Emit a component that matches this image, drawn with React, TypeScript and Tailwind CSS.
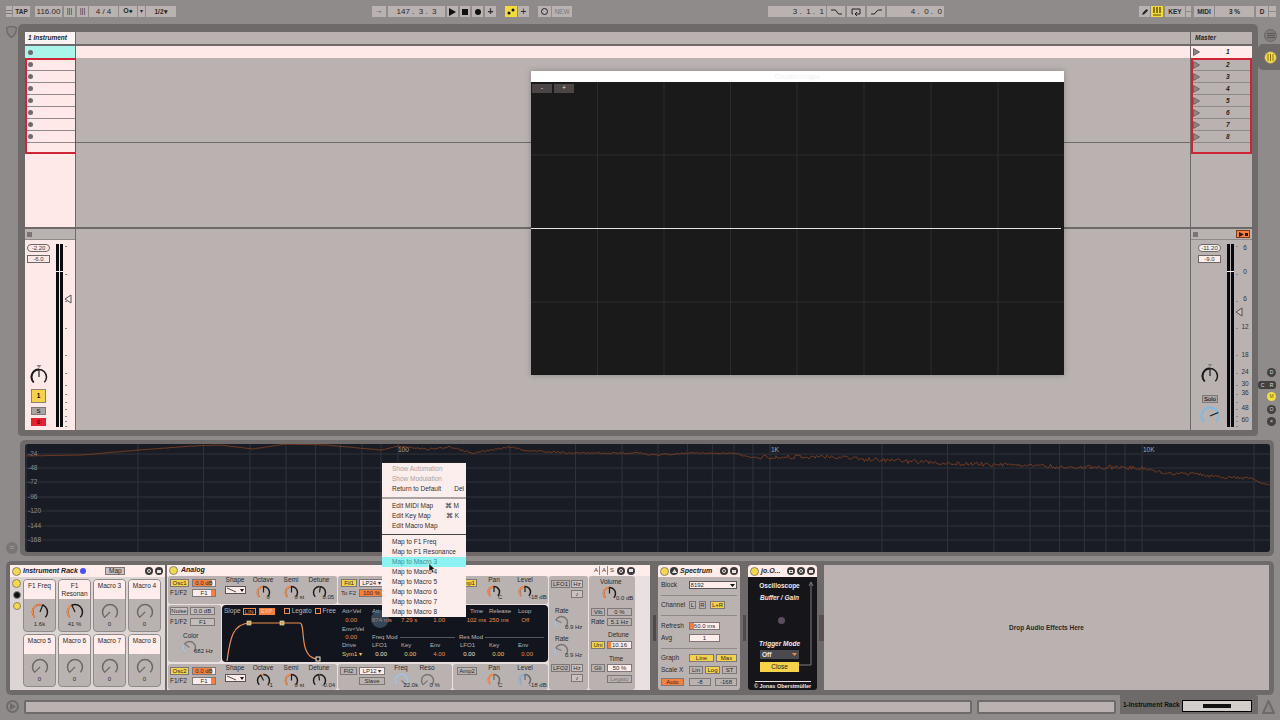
import type { ReactNode } from "react";

const box = "flex items-center justify-center bg-[#b9b2b1] text-[#2a2a2a]";
const chip = "flex items-center justify-center border border-[#7d7877] text-[6px] leading-none text-[#2a2a2a]";

function Box({ className = "", children }: { className?: string; children?: ReactNode }) {
  return <div className={`${box} h-[11px] text-[8px] ${className}`}>{children}</div>;
}

function Chip({ className = "", children }: { className?: string; children?: ReactNode }) {
  return <div className={`${chip} ${className}`}>{children}</div>;
}

type KnobProps = {
  size?: number;
  v?: number;
  from?: number;
  color?: string;
  track?: string;
  needle?: string;
  width?: number;
};

function Knob({ size = 16, v = 0.5, from = 0, color = "#f08a4b", track = "#1c1c1c", needle = "#1c1c1c", width = 1.5 }: KnobProps) {
  const r = size / 2 - width;
  const c = size / 2;
  const pt = (t: number, rad = r) => {
    const a = ((-135 + 270 * t - 90) * Math.PI) / 180;
    return `${(c + rad * Math.cos(a)).toFixed(2)} ${(c + rad * Math.sin(a)).toFixed(2)}`;
  };
  const arc = (a: number, b: number) =>
    `M${pt(a)} A${r} ${r} 0 ${(b - a) * 270 > 180 ? 1 : 0} 1 ${pt(b)}`;
  const lo = Math.min(from, v);
  const hi = Math.max(from, v);
  return (
    <svg width={size} height={size} className="block shrink-0">
      <path d={arc(0, 1)} fill="none" stroke={track} strokeWidth={width} />
      {hi > lo && <path d={arc(lo, hi)} fill="none" stroke={color} strokeWidth={width + 0.3} />}
      <path d={`M${c} ${c} L${pt(v, r + 0.5)}`} stroke={needle} strokeWidth={1.2} />
    </svg>
  );
}

function PanKnob() {
  return (
    <div className="flex flex-col items-center">
      <svg width="6" height="3" className="block"><path d="M0.5 0 H5.5 L3 3 Z" fill="#8a8584" /></svg>
      <Knob size={18} v={0.5} color="#1c1c1c" />
    </div>
  );
}

function Param({ label, value, w = "w-[28px]", knob, valueClass = "left-[14px]" }: { label: string; value: string; w?: string; knob: ReactNode; valueClass?: string }) {
  return (
    <div className={`${w} flex flex-col items-center`}>
      <span className="text-[6.5px] leading-[8px] text-[#2a2a2a] whitespace-nowrap">{label}</span>
      <div className="relative mt-[1px]">
        {knob}
        <span className={`absolute top-[8px] ${valueClass} text-[6px] leading-[8px] text-[#2a2a2a] whitespace-nowrap`}>{value}</span>
      </div>
    </div>
  );
}

function Dot({ className = "bg-[#3a3a3a]", children }: { className?: string; children?: ReactNode }) {
  return (
    <div className={`w-[8px] h-[8px] rounded-full shrink-0 flex items-center justify-center text-[5px] leading-none text-[#e8e0df] ${className}`}>
      {children}
    </div>
  );
}

function Led() {
  return <div className="w-[9px] h-[9px] rounded-full bg-[#f5d94c] border border-[#8a8272] shrink-0" />;
}

function TitleIcons({ n = 2 }: { n?: number }) {
  return (
    <div className="flex gap-[2px] ml-auto">
      {n > 2 && <Dot><span className="w-[4px] h-[3px] border border-[#e8e0df]" /></Dot>}
      <Dot><span className="w-[4px] h-[4px] rounded-full border border-[#e8e0df]" /></Dot>
      <Dot><span className="w-[4px] h-[3px] bg-[#e8e0df]" /></Dot>
    </div>
  );
}

function Slot() {
  return (
    <div className="h-[12px] shrink-0 flex items-center pl-[1px] border-b border-[#8f8a89]">
      <div className="w-[5px] h-[5px] rounded-full bg-[#6f6a6a]" />
    </div>
  );
}

function MasterSlot({ n, pale = false }: { n: number; pale?: boolean }) {
  return (
    <div className={`h-[12px] shrink-0 flex items-center ${pale ? "bg-[#ffeceb] pl-[2px]" : "border-b border-[#8f8a89]"}`}>
      <svg width="7" height="8"><path d="M0.5 0.5 L6.5 4 L0.5 7.5 Z" fill="#8a8584" stroke="#6c6766" /></svg>
      <span className="ml-[26px] text-[6.5px] font-bold italic text-[#222]">{n}</span>
    </div>
  );
}

function Meter({ master = false }: { master?: boolean }) {
  const ticks = [0, 28, 55, 82, 109, 127, 139, 148, 156, 163, 170, 175, 180];
  const marks = [[6, 3], [0, 27], [6, 54], [12, 82], [18, 110], [24, 127], [30, 139], [36, 148], [48, 163], [60, 175]];
  const bar = master ? "#050914" : "#0b0b0d";
  return (
    <svg width={master ? 25 : 18} height="184" className="block shrink-0">
      <rect x="0" y="0" width="3" height="183" fill={bar} />
      <rect x="4" y="0" width="3" height="183" fill={bar} />
      <rect x="0" y="27" width="7" height="1" fill="#f4f0ef" />
      {ticks.map((t) => (
        <rect key={t} x="9" y={t + 2} width="2" height="1" fill="#8c8786" />
      ))}
      <path
        d={master ? "M9 68 L15 64 L15 72 Z" : "M9 55 L15 51 L15 59 Z"}
        fill={master ? "#c9c2c1" : "#ffe9e8"}
        stroke="#55504f"
      />
      {master &&
        marks.map(([m, y], i) => (
          <text key={i} x="18" y={y + 2.5} textAnchor="middle" fontSize="6.5" fill="#333">{m}</text>
        ))}
    </svg>
  );
}

const anchors: [number, number][] = [
  [26, 456], [82, 455], [139, 450], [192, 446], [220, 445], [253, 449], [286, 444], [327, 445], [359, 448],
  [382, 450], [398, 446], [428, 449], [449, 447], [473, 453], [510, 447], [531, 451], [571, 453], [640, 453],
  [652, 455], [687, 453], [734, 453], [754, 458], [770, 457], [836, 457], [873, 460], [926, 462], [966, 464],
  [1028, 465], [1060, 467], [1105, 467], [1146, 468], [1162, 473], [1199, 474], [1220, 478], [1252, 478],
  [1260, 483], [1270, 485],
];

function curvePoints() {
  const pts: string[] = [];
  let seg = 0;
  for (let x = 26; x <= 1270; x += 1.5) {
    while (seg < anchors.length - 2 && x > anchors[seg + 1][0]) seg++;
    const [x0, y0] = anchors[seg];
    const [x1, y1] = anchors[seg + 1];
    const y = y0 + ((y1 - y0) * (x - x0)) / (x1 - x0);
    const n = Math.sin(x * 12.9898) * 43758.5453;
    const amp = x < 400 ? 0.2 : x < 760 ? 1 : x < 1150 ? 2.2 : x < 1250 ? 1.6 : 0.2;
    pts.push(`${(x - 25).toFixed(1)},${(y - 444 + (n - Math.floor(n) - 0.5) * 2 * amp).toFixed(1)}`);
  }
  return pts.join(" ");
}

function Spectrum() {
  const lines: number[] = [];
  [26, 398, 770, 1142].forEach((d) => {
    for (let k = 1; k < 10; k++) lines.push(d + 372 * Math.log10(k) - 25);
  });
  const h = [10, 24, 38, 53, 67, 82, 96];
  const labels = ["-24", "-48", "-72", "-96", "-120", "-144", "-168"];
  return (
    <svg width="1245" height="108" className="block">
      {h.map((y) => (
        <line key={y} x1="0" x2="1245" y1={y} y2={y} stroke="#30333b" />
      ))}
      {lines.filter((x) => x < 1245).map((x) => (
        <line key={x} x1={x} x2={x} y1="0" y2="108" stroke="#30333b" />
      ))}
      {labels.map((l, i) => (
        <text key={l} x="3" y={h[i] + 2} fontSize="6.5" fill="#8d8f95" stroke="#191c24" strokeWidth="0" >{l}</text>
      ))}
      <text x="373" y="8" fontSize="6.5" fill="#a5a7ad">100</text>
      <text x="746" y="8" fontSize="6.5" fill="#a5a7ad">1K</text>
      <text x="1118" y="8" fontSize="6.5" fill="#a5a7ad">10K</text>
      <polyline points={curvePoints()} fill="none" stroke="#7f3e20" strokeWidth="0.9" />
    </svg>
  );
}

function MacroCard({ label, value = "0", knob }: { label: string; value?: string; knob?: ReactNode }) {
  return (
    <div className="h-[53px] rounded-[4px] overflow-hidden border border-[#8f8a89] bg-[#b9b2b1] flex flex-col">
      <div className="h-[19px] bg-[#ffeceb] text-center text-[6.5px] leading-[8px] pt-[2px] text-[#2a2a2a]">{label}</div>
      <div className="flex flex-col items-center pt-[4px]">
        {knob ?? <Knob size={18} v={0} track="#6c6867" needle="#6c6867" />}
        <span className="text-[6px] leading-[7px] text-[#2a2a2a]">{value}</span>
      </div>
    </div>
  );
}

function Osc({ name, knobs }: { name: string; knobs: ReactNode }) {
  return (
    <div className="h-full w-[169px] rounded-[3px] bg-[#b9b2b1] flex pt-[3px] pl-[2px]">
      <div className="w-[46px] flex flex-col gap-[2px]">
        <div className="flex gap-[3px]">
          <Chip className="w-[19px] h-[8px] bg-[#f6d24a]">{name}</Chip>
          <Chip className="w-[24px] h-[8px] bg-[linear-gradient(90deg,#f4813f_85%,#ffeceb_85%)]">0.0 dB</Chip>
        </div>
        <div className="flex gap-[3px] items-center">
          <span className="w-[19px] text-[6.5px] leading-[8px] text-[#2a2a2a]">F1/F2</span>
          <Chip className="w-[24px] h-[8px] bg-[linear-gradient(90deg,#ffeceb_80%,#f4813f_80%)]">F1</Chip>
        </div>
      </div>
      <div className="w-[24px] ml-[7px] -mt-[3px] flex flex-col items-center">
        <span className="text-[6.5px] leading-[8px] text-[#2a2a2a]">Shape</span>
        <div className="w-[21px] h-[8px] mt-[2px] bg-[#ffeceb] border border-[#555] flex items-center justify-between pr-[1px]">
          <svg width="12" height="6"><path d="M1 1 L10 5" stroke="#222" strokeWidth="0.8" /></svg>
          <svg width="4" height="3"><path d="M0 0 H4 L2 3 Z" fill="#111" /></svg>
        </div>
      </div>
      <div className="-mt-[3px]">{knobs}</div>
    </div>
  );
}

function Amp({ name, on }: { name: string; on: boolean }) {
  return (
    <div className="h-full w-[95px] rounded-[3px] bg-[#b9b2b1] flex pt-[3px] pl-[4px]">
      <Chip className={`w-[20px] h-[8px] ${on ? "bg-[#f6d24a]" : ""}`}>{name}</Chip>
      <div className="ml-[4px] -mt-[3px]">
        <Param
          label="Pan"
          value="C"
          w="w-[26px]"
          valueClass="left-[11px]"
          knob={<Knob size={14} v={0.5} track={on ? "#1c1c1c" : "#6c6867"} needle={on ? "#1c1c1c" : "#6c6867"} />}
        />
      </div>
      <div className="ml-[4px] -mt-[3px]">
        <Param
          label="Level"
          value="-18 dB"
          w="w-[28px]"
          valueClass="left-[11px]"
          knob={on ? <Knob size={14} v={0.5} /> : <Knob size={14} v={0.5} color="#8cb4dc" track="#6c6867" needle="#6c6867" />}
        />
      </div>
    </div>
  );
}

function EnvGrid() {
  const lbl = "text-[#bdb6b5]";
  const org = "text-[#f08a4b]";
  const ylw = "text-[#f0d060]";
  const wht = "text-[#e8e0df]";
  const cells: [string, string][] = [
    ["Att<Vel", lbl], ["Att", lbl], ["", lbl], ["", lbl], ["      Time", lbl], ["Release", lbl], ["Loop", lbl],
    ["  0.00", org], ["874 ms", org], ["7.29 s", org], ["  1.00", org], ["    102 ms", org], ["250 ms", org], ["  Off", org],
  ];
  const row3: [string, string][] = [
    ["Drive", lbl], ["LFO1", lbl], ["Key", lbl], ["Env", lbl], ["LFO1", lbl], ["Key", lbl], ["Env", lbl],
    ["Sym1 ▾", ylw], ["  0.00", wht], ["  0.00", ylw], ["  4.00", org], ["  0.00", wht], ["  0.00", ylw], ["  0.00", org],
  ];
  return (
    <div className="relative w-[206px] ml-[4px] pt-[2px] text-[6px] leading-[9px] whitespace-pre">
      <div className="grid grid-cols-[30px_29px_29px_30px_29px_29px_30px]">
        {cells.map(([t, c], i) => (
          <span key={i} className={c}>{t}</span>
        ))}
      </div>
      <div className="absolute left-[29px] top-[5px] w-[18px] h-[18px] rounded-full bg-[#5a7896]/50" />
      <div className="flex h-[8px] leading-[8px] text-[#bdb6b5]">
        <span className="w-[30px]">Env&lt;Vel</span>
      </div>
      <div className="flex h-[8px] leading-[8px] text-[#bdb6b5]">
        <span className="w-[30px] text-[#f08a4b]">  0.00</span>
        <span className="w-[87px] flex items-center">
          Freq Mod<span className="ml-[2px] flex-1 h-px bg-[#55585f] mr-[4px]" />
        </span>
        <span className="flex-1 flex items-center">
          Res Mod<span className="ml-[2px] flex-1 h-px bg-[#55585f] mr-[4px]" />
        </span>
      </div>
      <div className="grid grid-cols-[30px_29px_29px_30px_29px_29px_30px]">
        {row3.map(([t, c], i) => (
          <span key={i} className={c}>{t}</span>
        ))}
      </div>
    </div>
  );
}

function Analog() {
  return (
    <div className="w-[483px] h-full bg-[#e9e0df] flex flex-col shrink-0">
      <div className="h-[12px] bg-[#ffeceb] flex items-center pl-[2px] pr-[15px] gap-[3px]">
        <Led />
        <span className="text-[7px] font-bold italic text-[#222]">Analog</span>
        <div className="ml-auto flex items-center gap-[2px]">
          <span className="text-[6px] text-[#333] border-r border-[#888] pr-[1px]">A</span>
          <span className="text-[6px] text-[#333] border-r border-[#888] pr-[1px]">A</span>
          <span className="text-[6px] text-[#333] pr-[1px]">S</span>
          <TitleIcons />
        </div>
      </div>
      <div className="flex flex-1 pl-[1px]">
        <div className="w-[380px] flex flex-col">
          <div className="h-[28px] flex gap-px">
            <Osc
              name="Osc1"
              knobs={
                <div className="flex ml-[2px]">
                  <Param label="Octave" value="0" knob={<Knob size={15} v={0.5} />} valueClass="left-[11px]" />
                  <Param label="Semi" value="0 st" knob={<Knob size={15} v={0.5} />} valueClass="left-[11px]" />
                  <Param label="Detune" value="0.05" knob={<Knob size={15} v={0.53} from={0.5} />} valueClass="left-[11px]" />
                </div>
              }
            />
            <div className="w-[114px] h-full rounded-[3px] bg-[#b9b2b1] flex flex-col gap-[2px] pt-[3px] pl-[3px]">
              <div className="flex gap-[2px]">
                <Chip className="w-[16px] h-[8px] bg-[#f6d24a]">Fil1</Chip>
                <Chip className="w-[25px] h-[8px] bg-[#ffeceb]">LP24 ▾</Chip>
              </div>
              <div className="flex gap-[2px] items-center">
                <span className="w-[16px] text-[6px] leading-[8px] text-[#2a2a2a] whitespace-nowrap">To F2</span>
                <Chip className="w-[25px] h-[8px] bg-[#f4813f]">100 %</Chip>
              </div>
            </div>
            <Amp name="Amp1" on />
          </div>
          <div className="h-[57px] mt-px flex">
            <div className="w-[53px] rounded-[3px] bg-[#b9b2b1] pt-[2px] pl-[2px] flex flex-col">
              <div className="flex gap-[2px]">
                <Chip className="w-[18px] h-[8px] bg-[#c9c2c1]">Noise</Chip>
                <Chip className="w-[25px] h-[8px] bg-[#c4bdbc]">0.0 dB</Chip>
              </div>
              <div className="flex gap-[2px] items-center mt-[3px]">
                <span className="w-[18px] text-[6.5px] leading-[8px] text-[#2a2a2a]">F1/F2</span>
                <Chip className="w-[25px] h-[8px] bg-[#c4bdbc]">F1</Chip>
              </div>
              <span className="mt-[6px] ml-[13px] text-[6.5px] leading-[8px] text-[#2a2a2a]">Color</span>
              <div className="relative ml-[12px]">
                <Knob size={15} v={0.3} color="#a7c5e4" track="#7b7675" needle="#7b7675" />
                <span className="absolute left-[12px] top-[7px] text-[6px] leading-[8px] text-[#2a2a2a]">682 Hz</span>
              </div>
            </div>
            <div className="flex-1 ml-[1px] rounded-[4px] bg-[#12151d] flex">
              <div className="w-[116px] pt-[2px] pl-[2px]">
                <div className="flex items-center text-[6.5px] leading-[8px] text-[#bdb6b5]">
                  <span>Slope</span>
                  <span className="ml-[2px] w-[13px] h-[7px] border border-[#f08a4b] text-center text-[#f08a4b] text-[5.5px] leading-[6px]">LIN</span>
                  <span className="ml-[3px] w-[16px] h-[7px] bg-[#f4813f] text-center text-[#f6ccb0] text-[5.5px] leading-[7px]">EXP</span>
                  <span className="ml-[9px] w-[6px] h-[6px] border border-[#f08a4b]" />
                  <span className="ml-[2px]">Legato</span>
                  <span className="ml-[3px] w-[6px] h-[6px] border border-[#f08a4b]" />
                  <span className="ml-[2px]">Free</span>
                </div>
                <svg width="112" height="46" className="block mt-[1px]">
                  <path d="M3 45 C6 22 9 8 25 7 L76 7 C80 7 78 26 82 34 C85 42 90 43 94 43" fill="none" stroke="#ef8d4f" strokeWidth="1.2" />
                  <rect x="23" y="5" width="4" height="4" fill="#c9a45a" stroke="#f4e9c9" strokeWidth="0.6" />
                  <rect x="56" y="5" width="4" height="4" fill="#c9a45a" stroke="#f4e9c9" strokeWidth="0.6" />
                  <rect x="92" y="41" width="4" height="4" fill="#12151d" stroke="#f4e9c9" strokeWidth="1" />
                </svg>
              </div>
              <EnvGrid />
            </div>
          </div>
          <div className="h-[26px] mt-[2px] flex gap-px">
            <Osc
              name="Osc2"
              knobs={
                <div className="flex ml-[2px]">
                  <Param label="Octave" value="-1" knob={<Knob size={15} v={0.4} from={0.5} />} valueClass="left-[12px]" />
                  <Param label="Semi" value="0 st" knob={<Knob size={15} v={0.5} />} valueClass="left-[11px]" />
                  <Param label="Detune" value="-0.04" knob={<Knob size={15} v={0.47} from={0.5} />} valueClass="left-[10px]" />
                </div>
              }
            />
            <div className="w-[114px] h-full rounded-[3px] bg-[#b9b2b1] flex pt-[3px] pl-[2px]">
              <div className="w-[46px] flex flex-col gap-[2px]">
                <div className="flex gap-[2px]">
                  <Chip className="w-[17px] h-[8px]">Fil2</Chip>
                  <Chip className="w-[26px] h-[8px] bg-[#ffeceb]">LP12 ▾</Chip>
                </div>
                <Chip className="ml-[19px] w-[26px] h-[8px]">Slave</Chip>
              </div>
              <div className="ml-[3px] -mt-[3px]">
                <Param label="Freq" value="22.0k" w="w-[24px]" valueClass="left-[10px]" knob={<Knob size={15} v={1} from={0} color="#a7c5e4" track="#7b7675" needle="#7b7675" />} />
              </div>
              <div className="ml-[2px] -mt-[3px]">
                <Param label="Reso" value="0 %" w="w-[24px]" valueClass="left-[10px]" knob={<Knob size={15} v={0} track="#7b7675" needle="#7b7675" />} />
              </div>
            </div>
            <Amp name="Amp2" on={false} />
          </div>
        </div>
        <div className="w-[39px] ml-[1px] rounded-[3px] bg-[#b9b2b1] flex flex-col pl-[2px] pt-[4px]">
          <div className="flex gap-[1px]">
            <Chip className="w-[19px] h-[8px]">LFO1</Chip>
            <Chip className="w-[12px] h-[8px] bg-[#c9c2c1]">Hz</Chip>
          </div>
          <Chip className="ml-[20px] mt-[2px] w-[12px] h-[8px] bg-[#c9c2c1]">♪</Chip>
          <span className="ml-[4px] mt-[9px] text-[6.5px] leading-[8px] text-[#2a2a2a]">Rate</span>
          <div className="relative ml-[3px]">
            <Knob size={15} v={0.25} color="#a7c5e4" track="#7b7675" needle="#7b7675" />
            <span className="absolute left-[11px] top-[8px] text-[6px] leading-[8px] text-[#2a2a2a]">0.9 Hz</span>
          </div>
          <span className="ml-[4px] mt-[5px] text-[6.5px] leading-[8px] text-[#2a2a2a]">Rate</span>
          <div className="relative ml-[3px]">
            <Knob size={15} v={0.25} color="#a7c5e4" track="#7b7675" needle="#7b7675" />
            <span className="absolute left-[11px] top-[8px] text-[6px] leading-[8px] text-[#2a2a2a]">0.9 Hz</span>
          </div>
          <div className="flex gap-[1px] mt-[6px]">
            <Chip className="w-[19px] h-[8px]">LFO2</Chip>
            <Chip className="w-[12px] h-[8px] bg-[#c9c2c1]">Hz</Chip>
          </div>
          <Chip className="ml-[20px] mt-[2px] w-[12px] h-[8px] bg-[#c9c2c1]">♪</Chip>
        </div>
        <div className="w-[46px] ml-px rounded-[3px] bg-[#b9b2b1] flex flex-col pl-[2px] pt-[2px]">
          <span className="ml-[9px] text-[6.5px] leading-[8px] text-[#2a2a2a]">Volume</span>
          <div className="relative ml-[11px]">
            <Knob size={15} v={0.5} from={0} />
            <span className="absolute left-[14px] top-[8px] text-[6px] leading-[8px] text-[#2a2a2a]">0.0 dB</span>
          </div>
          <div className="flex gap-[2px] mt-[7px] items-center">
            <Chip className="w-[14px] h-[8px]">Vib</Chip>
            <Chip className="w-[25px] h-[8px]">0 %</Chip>
          </div>
          <div className="flex gap-[2px] mt-[2px] items-center">
            <span className="w-[14px] text-[6.5px] leading-[8px] text-[#2a2a2a]">Rate</span>
            <Chip className="w-[25px] h-[8px]">5.1 Hz</Chip>
          </div>
          <span className="ml-[17px] mt-[5px] text-[6.5px] leading-[8px] text-[#2a2a2a]">Detune</span>
          <div className="flex gap-[2px] mt-[2px] items-center">
            <Chip className="w-[14px] h-[8px] bg-[#f6d24a]">Uni</Chip>
            <Chip className="w-[25px] h-[8px] bg-[linear-gradient(90deg,#f4813f_12%,#ffeceb_12%)]">10.16</Chip>
          </div>
          <span className="ml-[18px] mt-[6px] text-[6.5px] leading-[8px] text-[#2a2a2a]">Time</span>
          <div className="flex gap-[2px] mt-px items-center">
            <Chip className="w-[14px] h-[8px]">Gli</Chip>
            <Chip className="w-[25px] h-[8px] bg-[#ffeceb]">50 %</Chip>
          </div>
          <Chip className="ml-[16px] mt-[3px] w-[25px] h-[8px] !text-[#7d7877]">Legato</Chip>
        </div>
      </div>
    </div>
  );
}

function Grip({ className = "bg-[#4e4b4a]" }: { className?: string }) {
  return (
    <div className="w-[8px] h-full flex items-center justify-center shrink-0">
      <div className={`w-[3px] h-[26px] ${className}`} />
    </div>
  );
}

function SpectrumDevice() {
  return (
    <div className="w-[82px] h-full rounded-[3px] overflow-hidden bg-[#b9b2b1] flex flex-col shrink-0">
      <div className="h-[12px] bg-[#ffeceb] flex items-center px-[2px] gap-[1px]">
        <Led />
        <Dot><svg width="5" height="4"><path d="M2.5 0 L5 4 H0 Z" fill="#e8e0df" /></svg></Dot>
        <span className="ml-[1px] text-[7px] font-bold italic text-[#222]">Spectrum</span>
        <TitleIcons />
      </div>
      <div className="px-[3px] text-[6.5px] leading-[8px] text-[#2a2a2a]">
        <div className="flex items-center mt-[4px]">
          <span className="w-[28px]">Block</span>
          <div className="w-[49px] h-[8px] bg-[#ffeceb] border border-[#555] flex items-center justify-between px-[1px] text-[6px]">
            8192<svg width="5" height="3"><path d="M0 0 H5 L2.5 3 Z" fill="#111" /></svg>
          </div>
        </div>
        <div className="h-px bg-[#8f8a89] mt-[6px]" />
        <div className="flex items-center mt-[5px]">
          <span className="w-[28px]">Channel</span>
          <Chip className="w-[7px] h-[8px]">L</Chip>
          <Chip className="w-[7px] h-[8px] ml-[3px]">R</Chip>
          <Chip className="w-[15px] h-[8px] ml-[4px] bg-[#f6d24a]">L+R</Chip>
        </div>
        <div className="h-px bg-[#8f8a89] mt-[6px]" />
        <div className="flex items-center mt-[6px]">
          <span className="w-[28px]">Refresh</span>
          <Chip className="w-[31px] h-[8px] bg-[linear-gradient(90deg,#f4813f_15%,#ffeceb_15%)]">60.0 ms</Chip>
        </div>
        <div className="flex items-center mt-[4px]">
          <span className="w-[28px]">Avg</span>
          <Chip className="w-[31px] h-[8px] bg-[#ffeceb]">1</Chip>
        </div>
        <div className="h-px bg-[#8f8a89] mt-[6px]" />
        <div className="flex items-center mt-[5px]">
          <span className="w-[28px]">Graph</span>
          <Chip className="w-[25px] h-[8px] bg-[#f6d24a]">Line</Chip>
          <Chip className="w-[21px] h-[8px] ml-[2px] bg-[#f6d24a]">Max</Chip>
        </div>
        <div className="flex items-center mt-[4px]">
          <span className="w-[28px]">Scale X</span>
          <Chip className="w-[14px] h-[8px]">Lin</Chip>
          <Chip className="w-[15px] h-[8px] ml-[2px] bg-[#f6d24a]">Log</Chip>
          <Chip className="w-[15px] h-[8px] ml-[2px]">ST</Chip>
        </div>
        <div className="flex items-center mt-[4px]">
          <Chip className="w-[23px] h-[8px] bg-[#f4813f]">Auto</Chip>
          <Chip className="w-[22px] h-[8px] ml-[5px]">-8</Chip>
          <Chip className="w-[22px] h-[8px] ml-[4px]">-168</Chip>
        </div>
      </div>
    </div>
  );
}

function JoDevice() {
  return (
    <div className="w-[69px] h-full rounded-[3px] overflow-hidden bg-[#16161a] flex flex-col shrink-0">
      <div className="h-[12px] bg-[#ffeceb] flex items-center px-[2px] gap-[2px]">
        <Led />
        <span className="text-[7px] font-bold italic text-[#222]">jo.O...</span>
        <TitleIcons n={3} />
      </div>
      <div className="flex-1 relative flex flex-col items-center pr-[6px] text-[#efe9e8]">
        <span className="mt-[5px] text-[6.5px] leading-[8px] font-bold">Oscilloscope</span>
        <span className="mt-[4px] text-[6.5px] leading-[8px] font-bold italic">Buffer / Gain</span>
        <div className="mt-[15px] ml-[4px] w-[7px] h-[7px] rounded-full bg-[#5c4e60]" />
        <span className="mt-[16px] text-[6.5px] leading-[8px] font-bold italic">Trigger Mode</span>
        <div className="mt-[2px] w-[39px] h-[9px] bg-[#4a4a4e] flex items-center justify-between px-[2px] text-[6.5px] font-bold">
          Off<svg width="5" height="3"><path d="M0 0 H5 L2.5 3 Z" fill="#f08a4b" /></svg>
        </div>
        <div className="mt-[3px] w-[39px] h-[10px] bg-[#f6d24a] flex items-center justify-center text-[6.5px] text-[#222]">Close</div>
        <div className="mt-[9px] w-[56px] h-px bg-[#e8e0df] ml-[6px] shrink-0" />
        <span className="ml-[6px] text-[5.5px] leading-[8px] font-bold whitespace-nowrap">© Jonas Oberstmüller</span>
        <svg width="20" height="86" className="absolute left-[50px] top-[4px]">
          <path d="M1 84 H13 V2 M11 5 L13 1 L15 5" fill="none" stroke="#7c7c80" strokeWidth="1" />
        </svg>
      </div>
    </div>
  );
}

function ContextMenu() {
  const item = "h-[10px] pl-[10px] pr-[2px] flex items-center justify-between text-[6.5px] leading-none text-[#2f2f2f]";
  const maps = ["Map to Macro 4", "Map to Macro 5", "Map to Macro 6", "Map to Macro 7", "Map to Macro 8"];
  return (
    <div className="absolute left-[382px] top-[462px] w-[84px] h-[155px] bg-[#fdeeee] border-t border-[#222] pt-px z-20">
      <div className={`${item} !text-[#a8a2a2]`}>Show Automation</div>
      <div className={`${item} !text-[#a8a2a2]`}>Show Modulation</div>
      <div className={item}><span>Return to Default</span><span>Del</span></div>
      <div className="h-[7px] flex items-center"><div className="w-full h-[2px] bg-[#a9a4a3]" /></div>
      <div className={item}><span>Edit MIDI Map</span><span className="mr-[5px]">⌘ M</span></div>
      <div className={item}><span>Edit Key Map</span><span className="mr-[5px]">⌘ K</span></div>
      <div className={item}>Edit Macro Map</div>
      <div className="h-[6px] flex items-center"><div className="w-full h-px bg-[#444]" /></div>
      <div className={item}>Map to F1 Freq</div>
      <div className={item}>Map to F1 Resonance</div>
      <div className={`${item} bg-[#8cf3f2] !text-[#3f8f90]`}>Map to Macro 3</div>
      {maps.map((m) => (
        <div key={m} className={item}>{m}</div>
      ))}
    </div>
  );
}

function ScopeWindow() {
  const xs = [66.5, 133, 199.5, 266, 333, 400, 467];
  return (
    <div className="absolute left-[531px] top-[71px] w-[533px] h-[304px] shadow-[0_0_6px_rgba(0,0,0,0.25)] z-10 flex flex-col">
      <div className="h-[11px] bg-white text-center text-[8px] leading-[11px] text-[#f1f1f1]">Oscilloscope</div>
      <div className="relative flex-1 bg-[#1a1a1a]">
        <svg width="533" height="293" className="absolute inset-0">
          {xs.map((x) => (
            <line key={x} x1={x} x2={x} y1="0" y2="293" stroke="#2c2c2c" />
          ))}
          {[73, 220].map((y) => (
            <line key={y} x1="0" x2="533" y1={y} y2={y} stroke="#2c2c2c" />
          ))}
          <line x1="0" x2="530" y1="146.5" y2="146.5" stroke="#e6e3e3" />
        </svg>
        <div className="relative flex gap-[2px] pt-[2px] pl-px">
          <div className="w-[20px] h-[9px] bg-[#4b4545] text-center text-[7px] leading-[8px] text-[#ddd]">-</div>
          <div className="w-[20px] h-[9px] bg-[#4b4545] text-center text-[7px] leading-[8px] text-[#ddd]">+</div>
        </div>
      </div>
    </div>
  );
}

export default function App() {
  const macros = ["Macro 3", "Macro 4"];
  const macros2 = ["Macro 5", "Macro 6", "Macro 7", "Macro 8"];
  return (
    <div className="relative w-[1280px] h-[720px] overflow-hidden bg-[#8f8b8a] [font-family:'Liberation_Sans',sans-serif]">
      <div className="h-[24px] flex items-start pt-[6px] pl-[6px] text-[#2a2a2a]">
        <div className="w-[6px] h-[11px] bg-[#b9b2b1] flex flex-col justify-center gap-[2px]"><div className="h-px bg-[#7d7877]" /><div className="h-px bg-[#7d7877]" /></div>
        <Box className="w-[17px] ml-px !text-[6.5px] font-bold">TAP</Box>
        <Box className="w-[27px] ml-[5px]">116.00</Box>
        <Box className="w-[11px] ml-[2px] !text-[7px]">|||</Box>
        <Box className="w-[11px] ml-[2px] !text-[7px]">|||</Box>
        <Box className="w-[29px] ml-px">4 / 4</Box>
        <Box className="w-[18px] ml-px !text-[7px] font-bold">O●</Box>
        <Box className="w-[7px] ml-px !text-[6px]">▾</Box>
        <Box className="w-[30px] ml-px !text-[6.5px] font-bold justify-between px-[3px]"><span>1/2</span><span>▾</span></Box>

        <Box className="w-[14px] ml-[196px] !text-[7px]">→</Box>
        <Box className="w-[57px] ml-[2px] whitespace-pre">147 .  3 .  3</Box>
        <Box className="w-[11px] ml-[2px]"><svg width="7" height="8"><path d="M0 0 L7 4 L0 8 Z" fill="#111" /></svg></Box>
        <Box className="w-[10px] ml-[2px]"><div className="w-[6px] h-[6px] bg-[#111]" /></Box>
        <Box className="w-[11px] ml-[2px]"><div className="w-[6px] h-[6px] rounded-full bg-[#111]" /></Box>
        <Box className="w-[11px] ml-[2px] !text-[10px] font-bold">+</Box>
        <Box className="w-[12px] ml-[9px] !bg-[#f4db3b]"><svg width="9" height="7"><circle cx="2" cy="5" r="1.5" fill="#111" /><circle cx="6" cy="2" r="1.5" fill="#111" /></svg></Box>
        <Box className="w-[11px] ml-px !text-[10px]">+</Box>
        <Box className="w-[13px] ml-[9px]"><div className="w-[7px] h-[7px] rounded-full border border-[#222]" /></Box>
        <Box className="w-[20px] ml-px !text-[6.5px] !text-[#777]">NEW</Box>

        <Box className="w-[58px] ml-[196px] justify-end pr-[2px] whitespace-pre">3 .  1 .  1</Box>
        <Box className="w-[18px] ml-px"><svg width="11" height="6"><path d="M0 1 H4 C6 1 6 5 8 5 H11" fill="none" stroke="#222" /></svg></Box>
        <Box className="w-[18px] ml-[2px]"><svg width="10" height="8"><path d="M2 6 H1 V1 H9 V6 H5 M6 4 L4 6 L6 8" fill="none" stroke="#222" /></svg></Box>
        <Box className="w-[18px] ml-[2px]"><svg width="11" height="6"><path d="M0 5 H3 C5 5 5 1 8 1 H11" fill="none" stroke="#222" /></svg></Box>
        <Box className="w-[57px] ml-[2px] justify-end pr-[2px] whitespace-pre">4 .  0 .  0</Box>

        <Box className="w-[11px] ml-[195px]"><svg width="8" height="8"><path d="M1 7 L2 4.5 L5.5 1 L7 2.5 L3.5 6 Z" fill="#222" /></svg></Box>
        <Box className="w-[12px] ml-px !bg-[#f4db3b]"><svg width="8" height="9"><path d="M1 0 V6 M4 0 V6 M7 0 V6" stroke="#5a4b10" strokeWidth="1.4" /><path d="M0 8 H8" stroke="#5a4b10" /></svg></Box>
        <Box className="w-[20px] ml-[2px] !text-[6.5px] font-bold">KEY</Box>
        <div className="w-[5px] h-[11px] ml-px flex flex-col gap-px"><div className="flex-1 bg-[#b9b2b1]" /><div className="flex-1 bg-[#b9b2b1]" /></div>
        <Box className="w-[20px] ml-[3px] !text-[6.5px] font-bold">MIDI</Box>
        <Box className="w-[39px] ml-px !text-[6.5px] font-bold">3 %</Box>
        <Box className="w-[12px] ml-[2px] !text-[6.5px] font-bold">D</Box>
        <div className="w-[7px] h-[11px] ml-px flex flex-col gap-px"><div className="flex-1 bg-[#b9b2b1]" /><div className="flex-1 bg-[#b9b2b1]" /></div>
      </div>

      <div className="flex h-[412px]">
        <div className="w-[18px] pl-[6px] pt-[2px] shrink-0">
          <svg width="11" height="12"><path d="M0.5 2 Q5.5 -1 10.5 2 Q10.5 8 5.5 11.5 Q0.5 8 0.5 2 Z" fill="#8a8685" stroke="#6f6b6a" strokeWidth="1.5" /></svg>
        </div>
        <div className="w-[1240px] shrink-0 rounded-t-[5px] rounded-b-[4px] bg-[#6d6a69] pt-[8px] pb-[6px] pl-[7px] pr-[6px]">
          <div className="flex h-full">
            <div className="w-[50px] flex flex-col shrink-0">
              <div className="h-[12px] bg-[#fff4f3] text-[6.5px] leading-[12px] font-bold italic pl-[3px] text-[#222]">1 Instrument</div>
              <div className="h-[2px]" />
              <div className="h-[12px] bg-[#a9f5e9] flex items-center pl-[3px]"><div className="w-[5px] h-[5px] rounded-full bg-[#6f6a6a]" /></div>
              <div className="h-[96px] bg-[#ffe9e8] border-2 border-r border-[#cf2436] overflow-hidden -mr-px">
                <div className="-mt-[1px]">
                  {[1, 2, 3, 4, 5, 6, 7].map((s) => (
                    <Slot key={s} />
                  ))}
                </div>
              </div>
              <div className="h-[73px] bg-[#ffe9e8]" />
              <div className="h-[2px]" />
              <div className="h-[11px] bg-[#b9b2b1] border-b border-[#8f8a89] flex items-center pl-[2px]"><div className="w-[5px] h-[5px] bg-[#7a7574]" /></div>
              <div className="flex-1 bg-[#ffe9e8] flex pt-[4px]">
                <div className="w-[31px] flex flex-col items-start pl-[2px] pb-[4px]">
                  <div className="w-[23px] h-[8px] rounded-full border border-[#6d6867] text-center text-[6px] leading-[6px] text-[#333]">-2.20</div>
                  <div className="w-[23px] h-[8px] mt-[3px] border border-[#6d6867] text-center text-[6px] leading-[6px] text-[#333]">-6.0</div>
                  <div className="mt-auto ml-[3px]"><PanKnob /></div>
                  <div className="ml-[4px] mt-[3px] w-[15px] h-[14px] bg-[#f6d24a] border border-[#8a8272] text-center text-[6.5px] font-bold leading-[12px]">1</div>
                  <div className="ml-[4px] mt-[4px] w-[15px] h-[8px] bg-[#a9a3a2] border border-[#7d7877] text-center text-[6px] leading-[6px]">S</div>
                  <div className="ml-[4px] mt-[3px] w-[15px] h-[8px] bg-[#e5212f] text-center text-[6px] leading-[8px]">0</div>
                </div>
                <Meter />
              </div>
            </div>

            <div className="flex-1 ml-px flex flex-col bg-[#b9b2b1] min-w-0">
              <div className="h-[12px]" />
              <div className="h-[2px] bg-[#6d6a69]" />
              <div className="h-[12px] bg-[#ffe9e8]" />
              <div className="h-[84px]" />
              <div className="h-px bg-[#6d6a69]" />
              <div className="h-[84px]" />
              <div className="h-[2px] bg-[#6d6a69]" />
            </div>

            <div className="w-[61px] ml-px flex flex-col shrink-0">
              <div className="h-[12px] bg-[#b9b2b1] text-[6.5px] leading-[12px] font-bold italic pl-[4px] text-[#222]">Master</div>
              <div className="h-[2px]" />
              <MasterSlot n={1} pale />
              <div className="h-[96px] bg-[#b9b2b1] border-2 border-[#cf2436] overflow-hidden">
                <div className="-mt-[1px]">
                  {[2, 3, 4, 5, 6, 7, 8].map((n) => (
                    <MasterSlot key={n} n={n} />
                  ))}
                </div>
              </div>
              <div className="h-[73px] bg-[#b9b2b1]" />
              <div className="h-[2px]" />
              <div className="h-[11px] bg-[#b9b2b1] border-b border-[#8f8a89] flex items-center justify-between pl-[2px] pr-[2px]">
                <div className="w-[5px] h-[5px] bg-[#7a7574]" />
                <div className="w-[14px] h-[8px] bg-[#f4813f] border border-[#7a3a15] flex items-center justify-center"><svg width="9" height="5"><path d="M0 0 L5 2.5 L0 5 Z M6 1 H9 V4 H6 Z" fill="#2a1608" /></svg></div>
              </div>
              <div className="flex-1 bg-[#b9b2b1] flex pt-[4px]">
                <div className="w-[36px] shrink-0 flex flex-col items-start pl-[7px]">
                  <div className="w-[23px] h-[8px] rounded-full bg-[#f4eeed] border border-[#6d6867] text-center text-[6px] leading-[6px] text-[#333]">-11.20</div>
                  <div className="w-[23px] h-[8px] mt-[3px] bg-[#ffeceb] border border-[#6d6867] text-center text-[6px] leading-[6px] text-[#333]">-9.0</div>
                  <div className="mt-[101px] ml-[3px]"><PanKnob /></div>
                  <div className="ml-[4px] mt-[10px] w-[16px] h-[8px] bg-[#a9a3a2] border border-[#7d7877] text-center text-[6px] leading-[6px]">Solo</div>
                  <div className="ml-[2px] mt-[3px]"><Knob size={20} v={0.75} from={0} color="#7fb9e6" track="#7fb9e6" /></div>
                </div>
                <Meter master />
              </div>
            </div>
          </div>
        </div>
        <div className="flex-1 flex flex-col items-end">
          <div className="mt-[5px] mr-[6px] w-[13px] h-[13px] rounded-full bg-[#7f7b7a] border border-[#696564] flex flex-col items-center justify-center gap-px">
            <div className="w-[8px] h-px bg-[#5a5655]" /><div className="w-[8px] h-px bg-[#5a5655]" /><div className="w-[8px] h-px bg-[#5a5655]" />
          </div>
          <div className="mt-[2px] w-full h-[26px] rounded-l-[5px] bg-[#6d6a69] flex items-center justify-end pr-[6px]">
            <div className="w-[13px] h-[13px] rounded-full bg-[#f5d94c] border border-[#8a8272] flex items-center justify-center">
              <svg width="7" height="7"><path d="M1 0 V7 M3.5 0 V7 M6 0 V7" stroke="#8a7410" /></svg>
            </div>
          </div>
          <div className="mt-[298px] mr-[7px] flex flex-col items-end gap-[3.5px]">
            <div className="w-[9px] h-[9px] rounded-full bg-[#44403f] text-[5px] leading-[9px] text-center text-[#ddd]">D</div>
            <div className="flex">
              <div className="w-[9px] h-[8px] rounded-l-[3px] bg-[#44403f] text-[5px] leading-[8px] text-center text-[#ddd]">C</div>
              <div className="w-[9px] h-[8px] rounded-r-[3px] bg-[#44403f] text-[5px] leading-[8px] text-center text-[#ddd]">R</div>
            </div>
            <div className="w-[9px] h-[9px] rounded-full bg-[#f5e040] text-[5px] leading-[9px] text-center text-[#6a5a10]">M</div>
            <div className="w-[9px] h-[9px] rounded-full bg-[#44403f] text-[5px] leading-[9px] text-center text-[#ddd]">O</div>
            <div className="w-[9px] h-[9px] rounded-full bg-[#44403f] text-[5px] leading-[9px] text-center text-[#ddd]">×</div>
          </div>
        </div>
      </div>

      <div className="flex items-end h-[120px] pt-[4px]">
        <div className="w-[20px] pl-[6px] pb-[2px] shrink-0">
          <div className="w-[12px] h-[12px] rounded-full bg-[#7a7675] text-center text-[8px] leading-[11px] text-[#a9a3a2]">≈</div>
        </div>
        <div className="w-[1254px] h-[116px] rounded-[5px] bg-[#6d6a69] p-[4px] pl-[5px] shrink-0">
          <div className="w-[1245px] h-[108px] rounded-[3px] overflow-hidden bg-[#191c24]">
            <Spectrum />
          </div>
        </div>
      </div>

      <div className="h-[141px] pt-[5px]">
        <div className="ml-[6px] w-[1268px] h-[134px] rounded-[5px] bg-[#6d6a69] pt-[4px] pb-[5px] pl-[4px] flex">
          <div className="w-[155px] h-full bg-[#dcd5d4] flex flex-col shrink-0">
            <div className="h-[12px] bg-[#ffeceb] flex items-center px-[2px] gap-[2px]">
              <Led />
              <span className="text-[7px] font-bold italic text-[#222]">Instrument Rack</span>
              <div className="w-[6px] h-[6px] rounded-full bg-[#4a4ff0]" />
              <Chip className="ml-auto w-[20px] h-[8px] !text-[6.5px] bg-[#c9c2c1]">Map</Chip>
              <TitleIcons />
            </div>
            <div className="flex flex-1">
              <div className="w-[13px] pt-[2px] flex flex-col items-center gap-[3px]">
                <Led />
                <Dot className="bg-[#111] border border-[#888]" />
                <Dot className="bg-[#f5d94c] border border-[#8a8272]" />
              </div>
              <div className="grid grid-cols-[33px_33px_33px_33px] gap-x-[2px] gap-y-[2px] pt-[2px] h-fit">
                <MacroCard label="F1 Freq" value="1.6k" knob={<Knob size={18} v={0.58} />} />
                <MacroCard label="F1 Resonan" value="41 %" knob={<Knob size={18} v={0.41} />} />
                {macros.map((m) => (
                  <MacroCard key={m} label={m} />
                ))}
                {macros2.map((m) => (
                  <MacroCard key={m} label={m} />
                ))}
              </div>
            </div>
          </div>
          <div className="w-[2px] shrink-0" />
          <Analog />
          <Grip />
          <SpectrumDevice />
          <Grip />
          <JoDevice />
          <Grip className="bg-[#58514f] w-[5px]" />
          <div className="w-[445px] h-full bg-[#b9b2b1] flex items-center justify-center text-[6.5px] font-bold text-[#2a2a2a] -ml-px">
            Drop Audio Effects Here
          </div>
        </div>
      </div>

      <div className="flex items-start h-[23px] pt-[3px]">
        <div className="ml-[6px] w-[13px] h-[13px] rounded-full border-2 border-[#6d6a69] flex items-center justify-center shrink-0">
          <svg width="6" height="7"><path d="M0 0 L6 3.5 L0 7 Z" fill="#6d6a69" /></svg>
        </div>
        <div className="ml-[5px] w-[948px] h-[14px] rounded-[2px] border-2 border-[#6d6a69] bg-[#b9b2b1] shrink-0" />
        <div className="ml-[5px] w-[139px] h-[14px] rounded-[2px] border-2 border-[#6d6a69] bg-[#b9b2b1] shrink-0" />
        <div className="ml-[4px] w-[138px] h-[19px] -mt-[5px] bg-[#6d6a69] flex items-center pl-[3px] text-[6.5px] font-bold text-[#111] whitespace-nowrap rounded-tr-[3px] shrink-0">
          1-Instrument Rack
          <div className="ml-[2px] w-[70px] h-[12px] mt-[2px] border border-black bg-[#d2cfca] flex items-center justify-center">
            <div className="w-[28px] h-[4px] bg-[#111]" />
          </div>
        </div>
        <div className="ml-[4px] shrink-0">
          <svg width="13" height="14"><path d="M6.5 1 L12 13 H1 Z" fill="#8a8685" stroke="#6d6a69" strokeWidth="2" /></svg>
        </div>
      </div>

      <ScopeWindow />
      <ContextMenu />
      <svg width="8" height="11" className="absolute left-[428px] top-[563px] z-30">
        <path d="M1 0.5 L1 8.5 L3 6.8 L4.5 10 L6 9.3 L4.6 6.3 L7 6.2 Z" fill="#111" stroke="#fff" strokeWidth="0.5" />
      </svg>
    </div>
  );
}
